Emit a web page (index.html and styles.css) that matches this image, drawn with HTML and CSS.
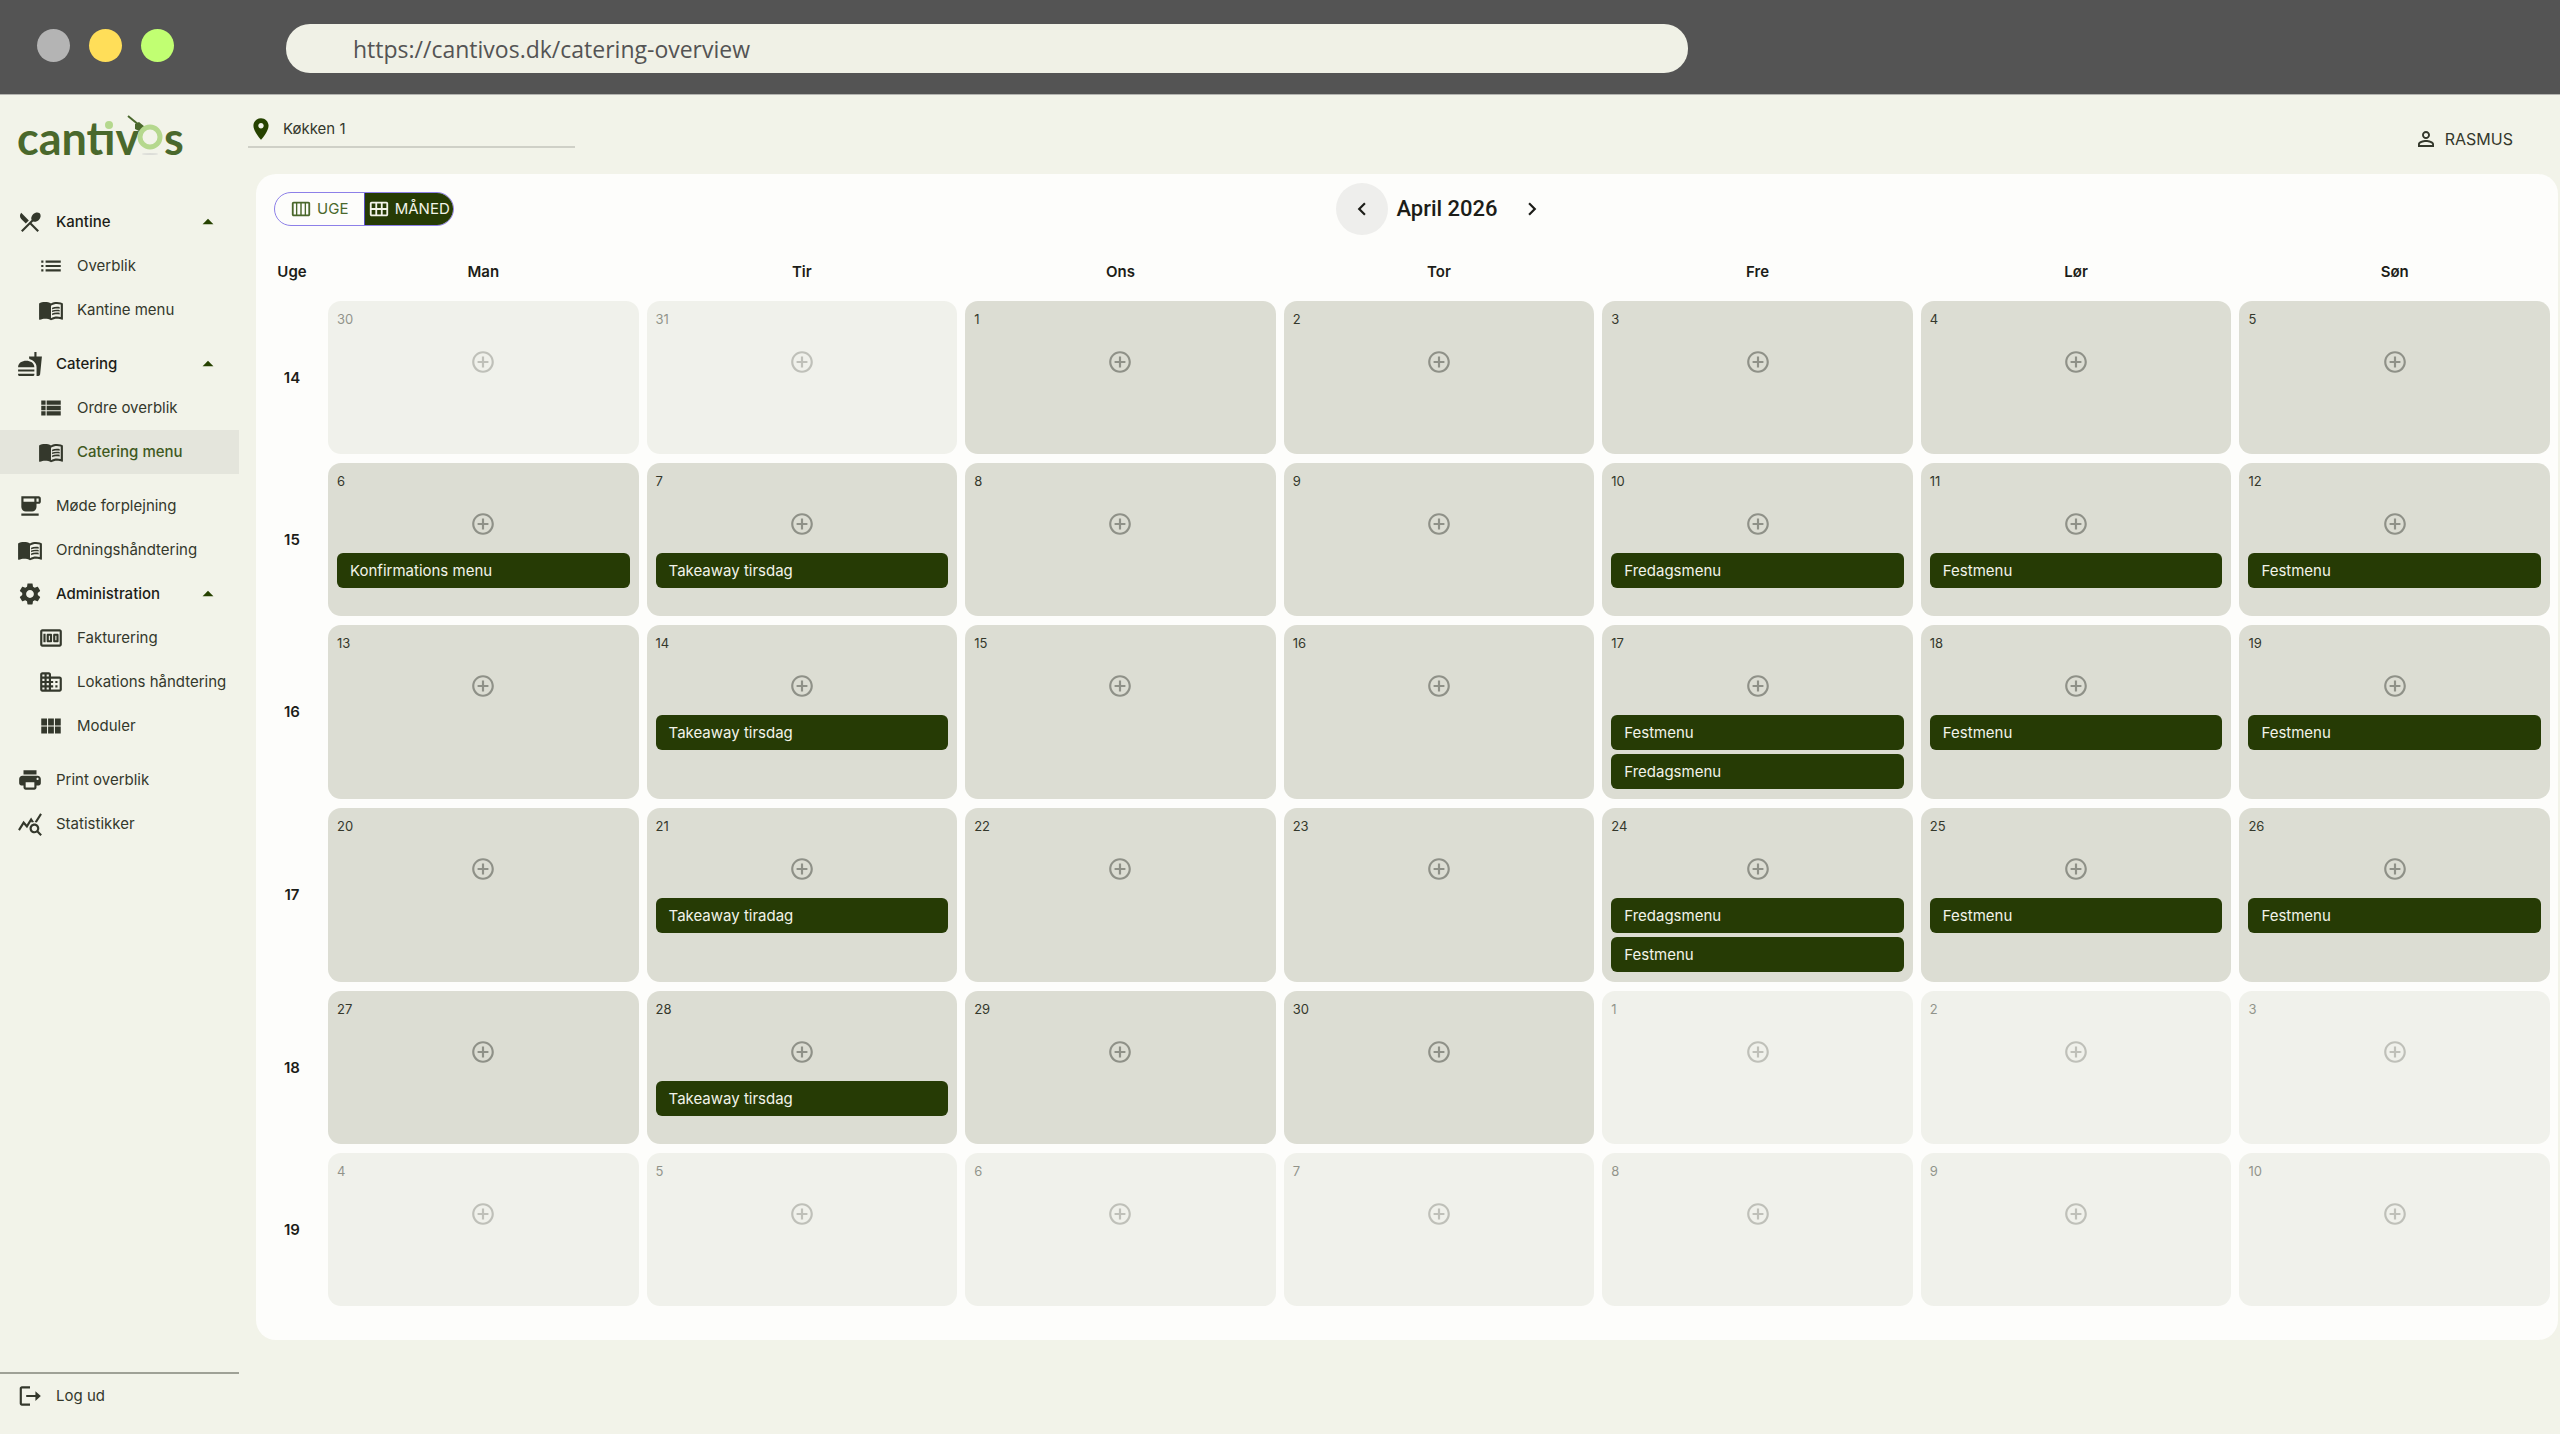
FILE: index.html
```
<!DOCTYPE html>
<html lang="da">
<head>
	<meta charset="UTF-8">
	<title>Cantivos - Catering menu</title>
	<meta name="viewport" content="width=device-width, initial-scale=1">
	<link rel="stylesheet" href="styles.css">
</head>
<body>
	<!-- Icons -->
	<svg class="sprite" aria-hidden="true">
		<symbol id="i-food" viewBox="0 0 24 24"><path d="M8.1 13.34l2.83-2.83L3.91 3.5c-1.56 1.56-1.56 4.09 0 5.66l4.19 4.18zm6.78-1.81c1.53.71 3.68.21 5.27-1.38 1.91-1.91 2.28-4.65.81-6.12-1.46-1.46-4.2-1.1-6.12.81-1.59 1.59-2.09 3.74-1.38 5.27L3.7 19.87l1.41 1.41L12 14.41l6.88 6.88 1.41-1.41L13.41 13l1.47-1.47z"/></symbol>
		<symbol id="i-list" viewBox="0 0 24 24"><path d="M3 13h2v-2H3v2zm0 4h2v-2H3v2zm0-8h2V7H3v2zm4 4h14v-2H7v2zm0 4h14v-2H7v2zM7 7v2h14V7H7z"/></symbol>
		<symbol id="i-book" viewBox="0 0 24 24"><path d="M21 5c-1.11-.35-2.33-.5-3.5-.5-1.95 0-4.05.4-5.5 1.5-1.45-1.1-3.55-1.5-5.5-1.5S2.45 4.9 1 6v14.65c0 .25.25.5.5.5.1 0 .15-.05.25-.05C3.1 20.45 5.05 20 6.5 20c1.95 0 4.05.4 5.5 1.5 1.35-.85 3.8-1.5 5.5-1.5 1.65 0 3.35.3 4.75 1.05.1.05.15.05.25.05.25 0 .5-.25.5-.5V6c-.6-.45-1.25-.75-2-1zm0 13.5c-1.1-.35-2.3-.5-3.5-.5-1.7 0-4.15.65-5.5 1.5V8c1.35-.85 3.8-1.5 5.5-1.5 1.2 0 2.4.15 3.500.5v11.500z"/><path d="M17.500 10.500c.88 0 1.730.090 2.500.260V9.240c-.790-.150-1.640-.240-2.500-.240-1.700 0-3.240.290-4.500.830v1.660c1.130-.640 2.700-.990 4.500-.990zM13 12.490v1.660c1.130-.640 2.700-.990 4.500-.990.880 0 1.730.090 2.500.260V11.900c-.790-.150-1.640-.240-2.500-.240-1.700 0-3.240.300-4.500.830zM17.500 14.330c-1.700 0-3.240.290-4.500.830v1.660c1.130-.640 2.700-.990 4.500-.990.880 0 1.730.090 2.500.260v-1.520c-.790-.160-1.640-.240-2.500-.240z"/></symbol>
		<symbol id="i-fastfood" viewBox="0 0 24 24"><path d="M18.060 22.990h1.660c.84 0 1.530-.640 1.630-1.460L23 5.050h-5V1h-1.970v4.050h-4.970l.300 2.340c1.710.470 3.310 1.320 4.270 2.260 1.440 1.420 2.430 2.890 2.430 5.290v8.050zM1 21.990V21h15.030v.990c0 .550-.450 1-1.010 1H2.010c-.560 0-1.010-.450-1.010-1zm15.030-7c0-8-15.030-8-15.030 0h15.030zM1.020 17h15v2h-15z"/></symbol>
		<symbol id="i-viewlist" viewBox="0 0 24 24"><path d="M3 14h4v-4H3v4zm0 5h4v-4H3v4zM3 9h4V5H3v4zm5 5h13v-4H8v4zm0 5h13v-4H8v4zM8 5v4h13V5H8z"/></symbol>
		<symbol id="i-coffee" viewBox="0 0 24 24"><path d="M20 3H4v10c0 2.210 1.790 4 4 4h6c2.210 0 4-1.790 4-4v-3h2c1.110 0 2-.890 2-2V5c0-1.110-.890-2-2-2zm-4 2v3H6V5h10zm4 3h-2V5h2v3zM4 19h16v2H4z"/></symbol>
		<symbol id="i-gear" viewBox="0 0 24 24"><path d="M19.140 12.940c.040-.300.060-.610.060-.940 0-.320-.020-.640-.070-.940l2.030-1.580c.180-.140.230-.410.120-.610l-1.920-3.320c-.120-.220-.370-.290-.590-.220l-2.390.960c-.500-.380-1.030-.700-1.620-.940l-.360-2.540c-.040-.240-.240-.410-.480-.410h-3.840c-.240 0-.430.170-.470.410l-.360 2.540c-.590.240-1.130.570-1.620.940l-2.390-.960c-.220-.080-.470 0-.590.220L2.740 8.870c-.120.210-.080.470.120.610l2.030 1.580c-.050.300-.090.630-.090.940s.020.640.070.940l-2.030 1.580c-.180.140-.230.410-.120.610l1.920 3.320c.120.220.370.290.590.220l2.390-.960c.500.380 1.030.700 1.620.940l.360 2.540c.050.240.240.410.480.410h3.840c.240 0 .440-.170.470-.410l.360-2.540c.590-.240 1.130-.560 1.620-.940l2.390.960c.220.080.470 0 .590-.220l1.920-3.320c.120-.220.070-.470-.120-.610l-2.010-1.580zM12 15.600c-1.980 0-3.600-1.620-3.600-3.600s1.620-3.600 3.600-3.600 3.600 1.620 3.600 3.600-1.620 3.600-3.600 3.600z"/></symbol>
		<symbol id="i-money" viewBox="0 0 24 24"><path d="M5 8h2v8H5zm7 0H9c-.550 0-1 .450-1 1v6c0 .550.450 1 1 1h3c.550 0 1-.450 1-1V9c0-.550-.450-1-1-1zm-1 6h-1v-4h1v4zm7-6h-3c-.550 0-1 .450-1 1v6c0 .550.450 1 1 1h3c.550 0 1-.450 1-1V9c0-.550-.450-1-1-1zm-1 6h-1v-4h1v4z"/><path d="M4 4c-1.100 0-2 .9-2 2v12c0 1.100.9 2 2 2h16c1.100 0 2-.9 2-2V6c0-1.100-.9-2-2-2H4zm0 14V6h16v12H4z"/></symbol>
		<symbol id="i-building" viewBox="0 0 24 24"><path d="M12 7V5c0-1.100-.9-2-2-2H4c-1.100 0-2 .9-2 2v14c0 1.100.9 2 2 2h16c1.100 0 2-.9 2-2V9c0-1.100-.9-2-2-2h-8zM6 19H4v-2h2v2zm0-4H4v-2h2v2zm0-4H4V9h2v2zm0-4H4V5h2v2zm4 12H8v-2h2v2zm0-4H8v-2h2v2zm0-4H8V9h2v2zm0-4H8V5h2v2zm10 12h-8v-2h2v-2h-2v-2h2v-2h-2V9h8v10zm-2-8h-2v2h2v-2zm0 4h-2v2h2v-2z"/></symbol>
		<symbol id="i-modules" viewBox="0 0 24 24"><path d="M3 5h5.330v6.500H3zM9.330 5h5.330v6.500H9.330zM15.670 5H21v6.500h-5.330zM3 12.500h5.330V19H3zM9.330 12.500h5.330V19H9.330zM15.670 12.500H21V19h-5.330z"/></symbol>
		<symbol id="i-print" viewBox="0 0 24 24"><path d="M19 8H5c-1.660 0-3 1.340-3 3v4c0 1.100.9 2 2 2h2v2c0 1.100.9 2 2 2h8c1.100 0 2-.9 2-2v-2h2c1.100 0 2-.9 2-2v-4c0-1.660-1.340-3-3-3zm-3 11H8v-5h8v5zm3-7c-.550 0-1-.450-1-1s.450-1 1-1 1 .450 1 1-.450 1-1 1zm-1-9H6v4h12V3z"/></symbol>
		<symbol id="i-stats" viewBox="0 0 24 24"><path d="M19.880 18.470c.440-.700.700-1.510.700-2.390 0-2.490-2.010-4.500-4.500-4.500s-4.500 2.010-4.500 4.500 2.010 4.500 4.490 4.500c.880 0 1.700-.260 2.390-.700L21.580 23 23 21.580l-3.120-3.110zm-3.800.110c-1.380 0-2.500-1.120-2.500-2.500s1.120-2.500 2.500-2.500 2.500 1.120 2.500 2.500-1.120 2.500-2.500 2.500zm-.360-8.500c-.740.020-1.450.180-2.100.450l-.550-.830-3.800 6.180-3.010-3.520-3.630 5.810L1 17l5-8 3 3.500L13 6l2.720 4.080zm2.590.500c-.640-.280-1.330-.450-2.050-.490L21.380 2 23 3.180l-4.690 7.400z"/></symbol>
		<symbol id="i-logout" viewBox="0 0 24 24"><path d="M12 3H4.500C3.400 3 2.500 3.900 2.500 5v14c0 1.100.9 2 2 2H12v-2H4.500V5H12zM17 7.500v3.500H8.500v2H17v3.500l5-4.500z"/></symbol>
		<symbol id="i-up" viewBox="0 0 24 24"><path d="M7 14l5-5 5 5z"/></symbol>
		<symbol id="i-pin" viewBox="0 0 24 24"><path d="M12 2C8.130 2 5 5.130 5 9c0 5.250 7 13 7 13s7-7.750 7-13c0-3.870-3.130-7-7-7zm0 9.500c-1.380 0-2.500-1.120-2.500-2.500s1.120-2.500 2.500-2.500 2.500 1.120 2.500 2.500-1.120 2.500-2.500 2.500z"/></symbol>
		<symbol id="i-person" viewBox="0 0 24 24"><path d="M12 5.900c1.160 0 2.100.940 2.100 2.100s-.940 2.100-2.100 2.100S9.900 9.160 9.900 8s.940-2.100 2.100-2.100m0 9c2.970 0 6.100 1.460 6.100 2.100v1.100H5.900V17c0-.640 3.130-2.100 6.100-2.100M12 4C9.790 4 8 5.790 8 8s1.790 4 4 4 4-1.790 4-4-1.790-4-4-4zm0 9c-2.670 0-8 1.340-8 4v3h16v-3c0-2.660-5.330-4-8-4z"/></symbol>
		<symbol id="i-week" viewBox="0 0 24 24"><path d="M20 4H4c-1.100 0-2 .9-2 2v12c0 1.100.9 2 2 2h16c1.100 0 2-.9 2-2V6c0-1.100-.9-2-2-2zM4 18V6h2.500v12H4zm4 0V6h3.200v12H8zm4.800 0V6H16v12h-3.200zm4.700 0V6H20v12h-2.500z"/></symbol>
		<symbol id="i-month" viewBox="0 0 24 24"><path d="M20 4H4c-1.100 0-2 .9-2 2v12c0 1.100.9 2 2 2h16c1.100 0 2-.9 2-2V6c0-1.100-.9-2-2-2zM8 11H4V6h4v5zm6 0h-4V6h4v5zm6 0h-4V6h4v5zM8 18H4v-5h4v5zm6 0h-4v-5h4v5zm6 0h-4v-5h4v5z"/></symbol>
		<symbol id="i-left" viewBox="0 0 24 24"><path d="M15.410 7.410L14 6l-6 6 6 6 1.410-1.410L10.830 12z"/></symbol>
		<symbol id="i-right" viewBox="0 0 24 24"><path d="M10 6L8.590 7.410 13.170 12l-4.580 4.590L10 18l6-6z"/></symbol>
		<symbol id="i-add" viewBox="0 0 24 24"><path d="M13 7h-2v4H7v2h4v4h2v-4h4v-2h-4V7zm-1-5C6.480 2 2 6.480 2 12s4.480 10 10 10 10-4.480 10-10S17.520 2 12 2zm0 18c-4.410 0-8-3.590-8-8s3.590-8 8-8 8 3.590 8 8-3.590 8-8 8z"/></symbol>
	</svg>

	<div class="browser">
		<div class="dots">
			<span class="dot"></span>
			<span class="dot yellow"></span>
			<span class="dot green"></span>
		</div>
		<input class="url" type="text" aria-label="Adresse" value="https://cantivos.dk/catering-overview">
	</div>

	<div class="app">
		<aside class="sidebar">
			<a class="logo" href="#" aria-label="cantivos">
				<svg viewBox="0 0 180 56" width="180" height="56">
					<text x="0" y="46">cantıv</text>
					<circle class="light" cx="92" cy="16" r="4"/>
					<path class="fork" d="M111 7l11 9"/>
					<path class="fork-head" d="M118 15l4-2 6 5-4 5-6-3z"/>
					<circle class="ring" cx="133" cy="28" r="10"/>
					<ellipse class="shadow" cx="133" cy="45" rx="8" ry="1"/>
					<text x="147" y="46">s</text>
				</svg>
			</a>
			<nav class="menu">
				<div class="group">
					<a class="item head" href="#"><svg><use href="#i-food"/></svg>Kantine<svg class="arrow"><use href="#i-up"/></svg></a>
					<a class="item sub" href="#"><svg><use href="#i-list"/></svg>Overblik</a>
					<a class="item sub" href="#"><svg><use href="#i-book"/></svg>Kantine menu</a>
				</div>
				<div class="group">
					<a class="item head" href="#"><svg><use href="#i-fastfood"/></svg>Catering<svg class="arrow"><use href="#i-up"/></svg></a>
					<a class="item sub" href="#"><svg><use href="#i-viewlist"/></svg>Ordre overblik</a>
					<a class="item sub active" href="#"><svg><use href="#i-book"/></svg>Catering menu</a>
				</div>
				<div class="group">
					<a class="item" href="#"><svg><use href="#i-coffee"/></svg>Møde forplejning</a>
					<a class="item" href="#"><svg><use href="#i-book"/></svg>Ordningshåndtering</a>
					<a class="item head" href="#"><svg><use href="#i-gear"/></svg>Administration<svg class="arrow"><use href="#i-up"/></svg></a>
					<a class="item sub" href="#"><svg><use href="#i-money"/></svg>Fakturering</a>
					<a class="item sub" href="#"><svg><use href="#i-building"/></svg>Lokations håndtering</a>
					<a class="item sub" href="#"><svg><use href="#i-modules"/></svg>Moduler</a>
				</div>
				<div class="group">
					<a class="item" href="#"><svg><use href="#i-print"/></svg>Print overblik</a>
					<a class="item" href="#"><svg><use href="#i-stats"/></svg>Statistikker</a>
				</div>
			</nav>
			<div class="logout">
				<a class="item" href="#"><svg><use href="#i-logout"/></svg>Log ud</a>
			</div>
		</aside>

		<main class="main">
			<header class="topbar">
				<div class="location">
					<svg><use href="#i-pin"/></svg>
					<select aria-label="Lokation">
						<option>Køkken 1</option>
					</select>
				</div>
				<button class="user" type="button"><svg><use href="#i-person"/></svg>RASMUS</button>
			</header>

			<section class="panel">
				<div class="toolbar">
					<div class="toggle">
						<button type="button"><svg><use href="#i-week"/></svg>UGE</button>
						<button type="button" class="on"><svg><use href="#i-month"/></svg>MÅNED</button>
					</div>
					<div class="month">
						<button type="button" class="hover" aria-label="Forrige"><svg><use href="#i-left"/></svg></button>
						<h1>April 2026</h1>
						<button type="button" aria-label="Næste"><svg><use href="#i-right"/></svg></button>
					</div>
				</div>

				<table class="calendar">
					<thead>
						<tr>
							<th class="week">Uge</th>
							<th>Man</th>
							<th>Tir</th>
							<th>Ons</th>
							<th>Tor</th>
							<th>Fre</th>
							<th>Lør</th>
							<th>Søn</th>
						</tr>
					</thead>
					<tbody>
						<tr>
							<th>14</th>
							<td class="out"><span class="day">30</span><button class="add" type="button" aria-label="Tilføj"><svg><use href="#i-add"/></svg></button></td>
							<td class="out"><span class="day">31</span><button class="add" type="button" aria-label="Tilføj"><svg><use href="#i-add"/></svg></button></td>
							<td><span class="day">1</span><button class="add" type="button" aria-label="Tilføj"><svg><use href="#i-add"/></svg></button></td>
							<td><span class="day">2</span><button class="add" type="button" aria-label="Tilføj"><svg><use href="#i-add"/></svg></button></td>
							<td><span class="day">3</span><button class="add" type="button" aria-label="Tilføj"><svg><use href="#i-add"/></svg></button></td>
							<td><span class="day">4</span><button class="add" type="button" aria-label="Tilføj"><svg><use href="#i-add"/></svg></button></td>
							<td><span class="day">5</span><button class="add" type="button" aria-label="Tilføj"><svg><use href="#i-add"/></svg></button></td>
						</tr>
						<tr>
							<th>15</th>
							<td><span class="day">6</span><button class="add" type="button" aria-label="Tilføj"><svg><use href="#i-add"/></svg></button><a class="event" href="#">Konfirmations menu</a></td>
							<td><span class="day">7</span><button class="add" type="button" aria-label="Tilføj"><svg><use href="#i-add"/></svg></button><a class="event" href="#">Takeaway tirsdag</a></td>
							<td><span class="day">8</span><button class="add" type="button" aria-label="Tilføj"><svg><use href="#i-add"/></svg></button></td>
							<td><span class="day">9</span><button class="add" type="button" aria-label="Tilføj"><svg><use href="#i-add"/></svg></button></td>
							<td><span class="day">10</span><button class="add" type="button" aria-label="Tilføj"><svg><use href="#i-add"/></svg></button><a class="event" href="#">Fredagsmenu</a></td>
							<td><span class="day">11</span><button class="add" type="button" aria-label="Tilføj"><svg><use href="#i-add"/></svg></button><a class="event" href="#">Festmenu</a></td>
							<td><span class="day">12</span><button class="add" type="button" aria-label="Tilføj"><svg><use href="#i-add"/></svg></button><a class="event" href="#">Festmenu</a></td>
						</tr>
						<tr>
							<th>16</th>
							<td><span class="day">13</span><button class="add" type="button" aria-label="Tilføj"><svg><use href="#i-add"/></svg></button></td>
							<td><span class="day">14</span><button class="add" type="button" aria-label="Tilføj"><svg><use href="#i-add"/></svg></button><a class="event" href="#">Takeaway tirsdag</a></td>
							<td><span class="day">15</span><button class="add" type="button" aria-label="Tilføj"><svg><use href="#i-add"/></svg></button></td>
							<td><span class="day">16</span><button class="add" type="button" aria-label="Tilføj"><svg><use href="#i-add"/></svg></button></td>
							<td><span class="day">17</span><button class="add" type="button" aria-label="Tilføj"><svg><use href="#i-add"/></svg></button><a class="event" href="#">Festmenu</a><a class="event" href="#">Fredagsmenu</a></td>
							<td><span class="day">18</span><button class="add" type="button" aria-label="Tilføj"><svg><use href="#i-add"/></svg></button><a class="event" href="#">Festmenu</a></td>
							<td><span class="day">19</span><button class="add" type="button" aria-label="Tilføj"><svg><use href="#i-add"/></svg></button><a class="event" href="#">Festmenu</a></td>
						</tr>
						<tr>
							<th>17</th>
							<td><span class="day">20</span><button class="add" type="button" aria-label="Tilføj"><svg><use href="#i-add"/></svg></button></td>
							<td><span class="day">21</span><button class="add" type="button" aria-label="Tilføj"><svg><use href="#i-add"/></svg></button><a class="event" href="#">Takeaway tiradag</a></td>
							<td><span class="day">22</span><button class="add" type="button" aria-label="Tilføj"><svg><use href="#i-add"/></svg></button></td>
							<td><span class="day">23</span><button class="add" type="button" aria-label="Tilføj"><svg><use href="#i-add"/></svg></button></td>
							<td><span class="day">24</span><button class="add" type="button" aria-label="Tilføj"><svg><use href="#i-add"/></svg></button><a class="event" href="#">Fredagsmenu</a><a class="event" href="#">Festmenu</a></td>
							<td><span class="day">25</span><button class="add" type="button" aria-label="Tilføj"><svg><use href="#i-add"/></svg></button><a class="event" href="#">Festmenu</a></td>
							<td><span class="day">26</span><button class="add" type="button" aria-label="Tilføj"><svg><use href="#i-add"/></svg></button><a class="event" href="#">Festmenu</a></td>
						</tr>
						<tr>
							<th>18</th>
							<td><span class="day">27</span><button class="add" type="button" aria-label="Tilføj"><svg><use href="#i-add"/></svg></button></td>
							<td><span class="day">28</span><button class="add" type="button" aria-label="Tilføj"><svg><use href="#i-add"/></svg></button><a class="event" href="#">Takeaway tirsdag</a></td>
							<td><span class="day">29</span><button class="add" type="button" aria-label="Tilføj"><svg><use href="#i-add"/></svg></button></td>
							<td><span class="day">30</span><button class="add" type="button" aria-label="Tilføj"><svg><use href="#i-add"/></svg></button></td>
							<td class="out"><span class="day">1</span><button class="add" type="button" aria-label="Tilføj"><svg><use href="#i-add"/></svg></button></td>
							<td class="out"><span class="day">2</span><button class="add" type="button" aria-label="Tilføj"><svg><use href="#i-add"/></svg></button></td>
							<td class="out"><span class="day">3</span><button class="add" type="button" aria-label="Tilføj"><svg><use href="#i-add"/></svg></button></td>
						</tr>
						<tr>
							<th>19</th>
							<td class="out"><span class="day">4</span><button class="add" type="button" aria-label="Tilføj"><svg><use href="#i-add"/></svg></button></td>
							<td class="out"><span class="day">5</span><button class="add" type="button" aria-label="Tilføj"><svg><use href="#i-add"/></svg></button></td>
							<td class="out"><span class="day">6</span><button class="add" type="button" aria-label="Tilføj"><svg><use href="#i-add"/></svg></button></td>
							<td class="out"><span class="day">7</span><button class="add" type="button" aria-label="Tilføj"><svg><use href="#i-add"/></svg></button></td>
							<td class="out"><span class="day">8</span><button class="add" type="button" aria-label="Tilføj"><svg><use href="#i-add"/></svg></button></td>
							<td class="out"><span class="day">9</span><button class="add" type="button" aria-label="Tilføj"><svg><use href="#i-add"/></svg></button></td>
							<td class="out"><span class="day">10</span><button class="add" type="button" aria-label="Tilføj"><svg><use href="#i-add"/></svg></button></td>
						</tr>
					</tbody>
				</table>
			</section>
		</main>
	</div>
</body>
</html>
```
FILE: styles.css
```
* {
	box-sizing: border-box;
}
body {
	margin: 0;
	min-height: 100vh;
	display: flex;
	flex-direction: column;
	background: #f2f3e9;
	color: #34382c;
	font: 15px/20px Inter, sans-serif;
}
a {
	color: inherit;
	text-decoration: none;
}
button, select, input {
	font: inherit;
	color: inherit;
	border: 0;
	padding: 0;
	background: none;
}
svg {
	width: 26px;
	height: 26px;
	flex: none;
	fill: currentColor;
}
.sprite {
	display: none;
}

/* browser bar */
.browser {
	display: flex;
	align-items: center;
	gap: 112px;
	height: 95px;
	padding: 3px 37px 0;
	background: #545454;
	border-bottom: 1px solid #b4b4b0;
}
.dots {
	display: flex;
	align-items: center;
	gap: 19px;
	padding-bottom: 7px;
}
.dot {
	width: 33px;
	height: 33px;
	border-radius: 50%;
	background: #b4b4b4;
}
.yellow {
	background: #ffde59;
}
.green {
	background: #c1ff72;
}
.url {
	width: 56.4%;
	height: 49px;
	padding: 0 67px;
	border-radius: 24px;
	background: #f0f1e6;
	color: #545454;
	font: 23px/32px "Open Sans", sans-serif;
}

.app {
	flex: 1;
	display: flex;
}

/* sidebar */
.sidebar {
	display: flex;
	flex-direction: column;
	width: 239px;
	flex: none;
}
.logo {
	height: 105px;
	padding: 14px 0 0 17px;
}
.logo svg {
	width: 180px;
	height: 56px;
}
.logo text {
	font: 700 45px Lato, sans-serif;
	fill: #4a682c;
}
.light {
	fill: #b5d88e;
}
.ring {
	fill: none;
	stroke: #b5d88e;
	stroke-width: 5;
}
.fork {
	fill: none;
	stroke: #4a682c;
	stroke-width: 2;
}
.fork-head {
	fill: #4a682c;
}
.shadow {
	fill: #dcddd8;
}
.menu {
	flex: 1;
}
.group {
	margin-bottom: 10px;
}
.item {
	display: flex;
	align-items: center;
	gap: 13px;
	height: 44px;
	padding-left: 17px;
	white-space: nowrap;
}
.sub {
	padding-left: 38px;
}
.head {
	font-weight: 500;
	color: #1c1d18;
}
.head svg {
	color: #34382c;
}
.head .arrow {
	margin-left: auto;
	margin-right: 18px;
	color: #264200;
}
.active {
	background: #e4e5dc;
	color: #3f5a1f;
	font-weight: 500;
}
.active svg {
	color: #34382c;
}
.logout {
	border-top: 2px solid #9fa196;
	padding-bottom: 16px;
}

/* content */
.main {
	flex: 1;
	padding: 0 2px 0 17px;
}
.topbar {
	display: flex;
	justify-content: space-between;
	height: 79px;
	padding-right: 45px;
}
.location {
	display: flex;
	align-items: center;
	gap: 9px;
	width: 327px;
	height: 53px;
	margin-left: -8px;
	padding-top: 16px;
	border-bottom: 2px solid #cfd0c7;
}
.location svg {
	color: #264200;
}
.location select {
	flex: 1;
	appearance: none;
}
.user {
	display: flex;
	align-items: center;
	gap: 7px;
	padding-top: 9px;
	font-size: 16px;
}
.user svg {
	width: 24px;
	height: 24px;
}
.panel {
	padding: 9px 0 25px;
	border-radius: 20px;
	background: #fdfdfb;
}
.toolbar {
	display: grid;
	grid-template-columns: 180px 1fr 100px;
	align-items: center;
	padding: 0 18px;
}
.toggle {
	display: flex;
	height: 34px;
	border: 1px solid #8d80e8;
	border-radius: 17px;
	overflow: hidden;
}
.toggle button {
	flex: 1;
	display: flex;
	align-items: center;
	justify-content: center;
	gap: 5px;
	color: #4a682c;
}
.toggle .on {
	background: #263b05;
	color: #f2f3e9;
	border-left: 1px solid #5a4fc0;
}
.toggle svg {
	width: 22px;
	height: 22px;
}
.month {
	display: flex;
	justify-content: center;
	align-items: center;
	gap: 8px;
	color: #1c1d18;
}
.month h1 {
	margin: 0;
	font: 500 22px/28px Roboto, sans-serif;
}
.month button {
	display: flex;
	align-items: center;
	justify-content: center;
	width: 52px;
	height: 52px;
	border-radius: 50%;
}
.month .hover {
	background: #eeeeec;
}

/* calendar */
.calendar {
	width: 100%;
	margin-top: 8px;
	table-layout: fixed;
	border-collapse: separate;
	border-spacing: 8px 9px;
}
.calendar th {
	padding: 0;
	font-weight: 600;
	color: #1c1d18;
}
.calendar thead th {
	height: 40px;
}
.week {
	width: 56px;
}
.calendar td {
	height: 153px;
	padding: 8px 9px 10px;
	vertical-align: top;
	border-radius: 13px;
	background: #dcddd3;
}
.calendar .out {
	background: #f0f1eb;
}
.out .day, .out .add {
	opacity: 0.5;
}
.day {
	display: block;
	font-size: 13px;
}
.add {
	display: flex;
	align-items: center;
	justify-content: center;
	width: 40px;
	height: 40px;
	margin: 13px auto 9px;
	color: #8f9188;
}
.event {
	display: block;
	height: 35px;
	padding: 0 13px;
	border-radius: 6px;
	background: #263b05;
	color: #f2f3e9;
	line-height: 35px;
}
.event + .event {
	margin-top: 4px;
}
```
